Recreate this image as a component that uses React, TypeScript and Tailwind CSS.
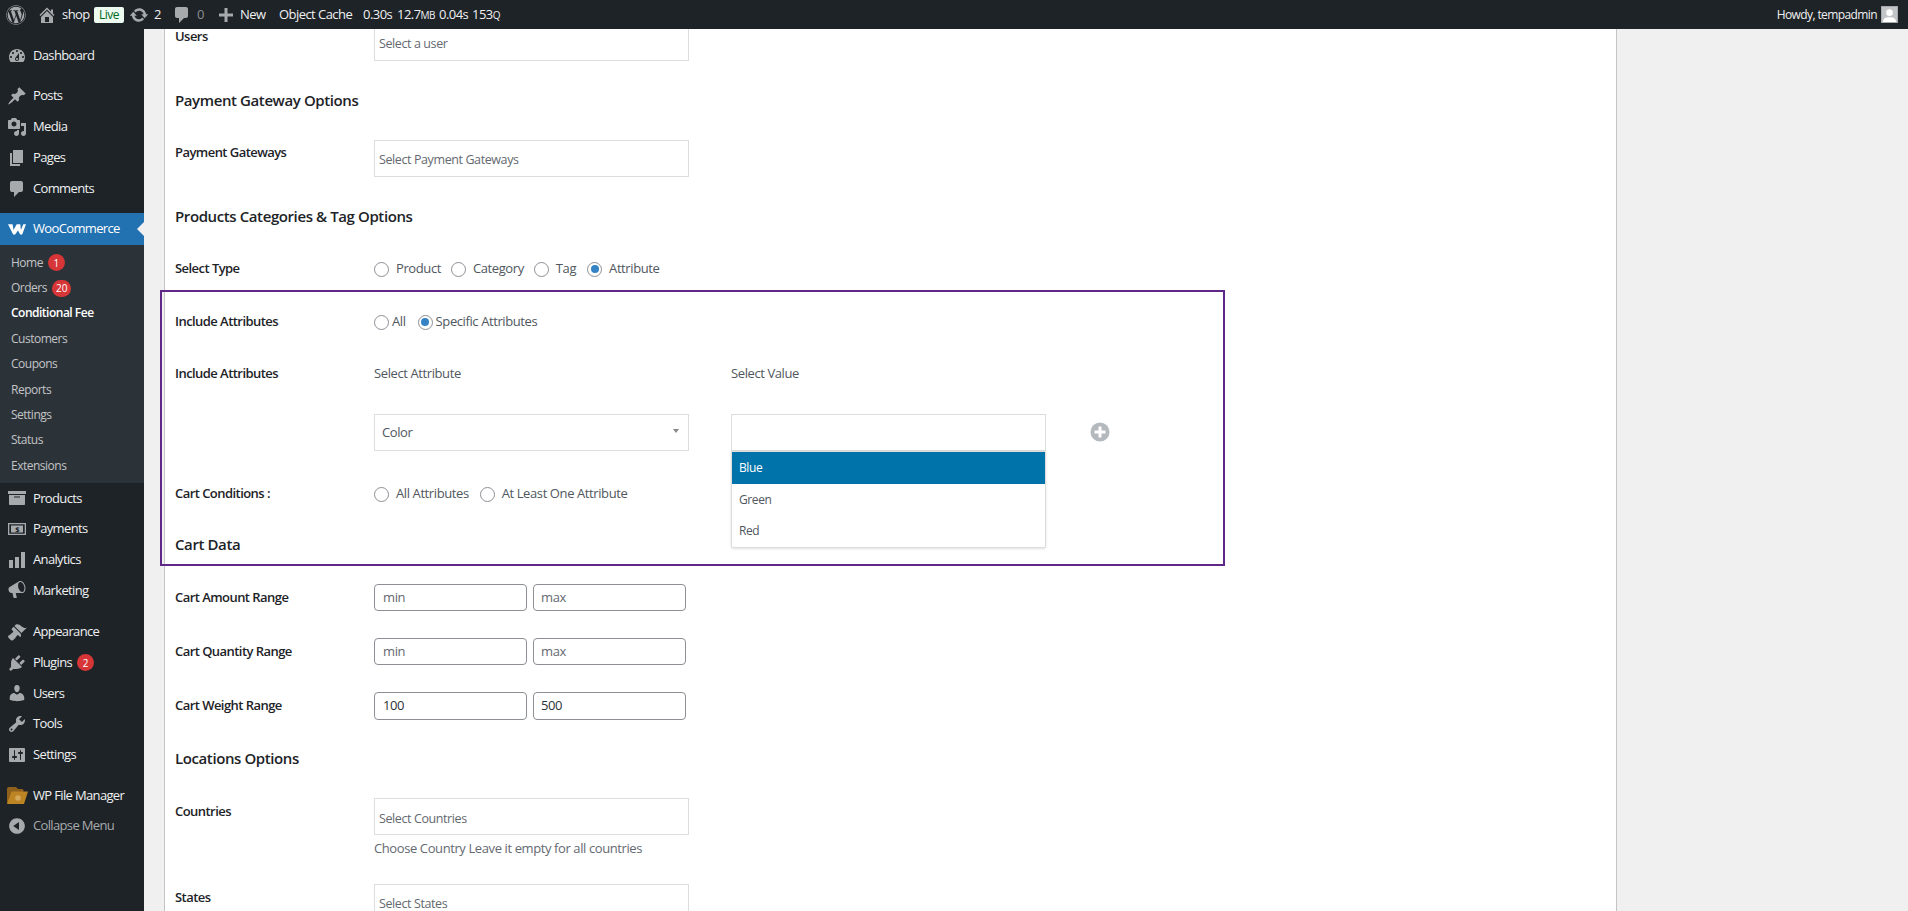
import type { ReactNode } from 'react';
import { FaWordpress } from 'react-icons/fa';

const dash = {
  dashboard: 'M3.76 16h12.48c1.1-1.37 1.76-3.11 1.76-5 0-4.42-3.58-8-8-8s-8 3.58-8 8c0 1.89.66 3.63 1.76 5zM10 4c.55 0 1 .45 1 1s-.45 1-1 1-1-.45-1-1 .45-1 1-1zM6 6c.55 0 1 .45 1 1s-.45 1-1 1-1-.45-1-1 .45-1 1-1zm8 0c.55 0 1 .45 1 1s-.45 1-1 1-1-.45-1-1 .45-1 1-1zm-5.37 5.55L12 7v6c0 1.1-.9 2-2 2s-2-.9-2-2c0-.57.24-1.08.63-1.45zM4 10c.55 0 1 .45 1 1s-.45 1-1 1-1-.45-1-1 .45-1 1-1zm12 0c.55 0 1 .45 1 1s-.45 1-1 1-1-.45-1-1 .45-1 1-1zm-5 3c0-.55-.45-1-1-1s-1 .45-1 1 .45 1 1 1 1-.45 1-1z',
  post: 'M10.44 3.02l1.82-1.82 6.36 6.35-1.83 1.82c-1.05-.68-2.48-.57-3.41.36l-.75.75c-.92.93-1.04 2.35-.35 3.41l-1.83 1.82-2.41-2.41-2.8 2.79c-.42.42-3.38 2.71-3.8 2.29s1.86-3.39 2.28-3.81l2.79-2.79L4.1 9.36l1.83-1.82c1.05.69 2.48.57 3.4-.36l.75-.75c.93-.92 1.05-2.35.36-3.41z',
  media: 'M13 11V4c0-.55-.45-1-1-1h-1.67L9 1H5L3.67 3H2c-.55 0-1 .45-1 1v7c0 .55.45 1 1 1h10c.55 0 1-.45 1-1zM7 4.5c1.38 0 2.5 1.12 2.5 2.5S8.38 9.5 7 9.5 4.5 8.38 4.5 7 5.62 4.5 7 4.5zM14 6h5v10.5c0 1.38-1.12 2.5-2.5 2.5S14 17.88 14 16.5s1.12-2.5 2.5-2.5c.17 0 .34.02.5.05V9h-3V6zm-4 8.05V13h2v3.5c0 1.38-1.12 2.5-2.5 2.5S7 17.88 7 16.5 8.12 14 9.5 14c.17 0 .34.02.5.05z',
  page: 'M6 15V2h10v13H6zm-1 1h8v2H3V5h2v11z',
  comment: 'M5 2h9c1.1 0 2 .9 2 2v7c0 1.1-.9 2-2 2h-2l-5 5v-5H5c-1.1 0-2-.9-2-2V4c0-1.1.9-2 2-2z',
  archive: 'M19 3v3H1V3h18zM2 7h16v9c0 .55-.45 1-1 1H3c-.55 0-1-.45-1-1V7zm5 1.5v1h6v-1H7z',
  analytics: 'M18 18V2h-4v16h4zm-6 0V7H8v11h4zm-6 0v-8H2v8h4z',
  marketing: 'M18.15 5.94c.46 1.62.38 3.22-.02 4.48-.42 1.28-1.26 2.18-2.3 2.48-.16.06-.26.06-.4.06-.06.02-.12.02-.18.02-.06.02-.14.02-.22.02H8.7l1.12 4.5c.02.14-.06.26-.14.34-.08.1-.24.16-.34.16H6.95c-.1 0-.26-.06-.34-.16-.08-.08-.16-.2-.14-.34l-1-4.5H4.25l-.02-.02c-.5.06-1.08-.18-1.54-.62s-.88-1.08-1.06-1.88c-.24-.8-.2-1.56-.02-2.2.18-.62.58-1.08 1.06-1.3l.02-.02 9-5.4c.1-.06.18-.1.24-.16.06-.04.14-.08.24-.12.16-.08.28-.12.5-.18 1.04-.3 2.24.1 3.22.98.98.88 1.8 2.24 2.26 3.86zm-2.58 5.98h-.02c.4-.1.74-.34 1.04-.7.58-.7.86-1.76.86-3.04 0-.64-.1-1.3-.26-1.98-.34-1.36-1.02-2.5-1.78-3.24s-1.68-1.1-2.46-.88c-.82.22-1.4.96-1.7 2-.32 1.04-.28 2.36.06 3.72.38 1.36 1 2.5 1.8 3.24.78.74 1.62 1.1 2.46.88z',
  appearance: 'M14.48 11.06L7.41 3.99l1.5-1.5c.5-.56 2.3-.47 3.51.32 1.21.8 1.43 1.28 2.91 2.1 1.18.64 2.45 1.26 4.45.85zm-.71.71L6.7 4.7 4.93 6.47c-.39.39-.39 1.02 0 1.41l1.06 1.06c.39.39.39 1.03 0 1.42-.6.6-1.43 1.11-2.21 1.69-.35.26-.7.53-1.01.84C1.43 13.23.76 14.24 1.1 14.9c.54 1.06 2.48 3 3.54 3.54.66.34 1.67-.33 2.97-1.67.31-.31.58-.66.84-1.01.58-.78 1.09-1.61 1.69-2.21.39-.39 1.03-.39 1.42 0l1.06 1.06c.39.39 1.02.39 1.41 0z',
  plugins: 'M13.11 4.36L9.87 7.6 8 5.73l3.24-3.24c.35-.34 1.05-.2 1.56.32.52.51.66 1.21.31 1.55zm-8 1.77l.91-1.12 9.01 9.01-1.19.84c-.71.71-2.63 1.16-3.82 1.16H6.14L4.9 17.26c-.59.59-1.54.59-2.12 0-.59-.58-.59-1.53 0-2.12l1.24-1.24v-3.88c0-1.13.4-3.19 1.09-3.89zm7.26 3.97l3.24-3.24c.34-.35 1.04-.21 1.55.31.52.51.66 1.21.31 1.55l-3.24 3.25z',
  users: 'M10 9.25c-2.27 0-2.73-3.44-2.73-3.44C7 4.02 7.82 2 9.97 2c2.16 0 2.98 2.02 2.71 3.81 0 0-.41 3.44-2.68 3.44zm0 2.57L12.72 10c2.39 0 4.52 2.33 4.52 4.53v2.49s-3.65 1.13-7.24 1.13c-3.65 0-7.24-1.13-7.24-1.13v-2.49c0-2.25 1.94-4.48 4.47-4.48z',
  tools: 'M16.68 9.77c-1.34 1.34-3.3 1.67-4.95.99l-5.41 6.52c-.99.99-2.59.99-3.58 0s-.99-2.59 0-3.57l6.52-5.42c-.68-1.65-.35-3.61.99-4.95 1.28-1.28 3.12-1.62 4.72-1.06l-2.89 2.89 2.82 2.82 2.86-2.87c.53 1.58.18 3.39-1.08 4.67zM3.81 16.21c.4.39 1.04.39 1.43 0 .4-.4.4-1.04 0-1.43-.39-.4-1.03-.4-1.43 0-.39.39-.39 1.03 0 1.43z',
  settings: 'M18 16V4c0-.55-.45-1-1-1H3c-.55 0-1 .45-1 1v12c0 .55.45 1 1 1h14c.55 0 1-.45 1-1zM8 11h1c.55 0 1 .45 1 1s-.45 1-1 1H8v1.5c0 .28-.22.5-.5.5s-.5-.22-.5-.5V13H6c-.55 0-1-.45-1-1s.45-1 1-1h1V5.5c0-.28.22-.5.5-.5s.5.22.5.5V11zm5-2h-1c-.55 0-1-.45-1-1s.45-1 1-1h1V5.5c0-.28.22-.5.5-.5s.5.22.5.5V7h1c.55 0 1 .45 1 1s-.45 1-1 1h-1v5.5c0 .28-.22.5-.5.5s-.5-.22-.5-.5V9z',
  collapse: 'M10 2.16c4.33 0 7.84 3.51 7.84 7.84s-3.51 7.84-7.84 7.84S2.16 14.33 2.16 10 5.71 2.16 10 2.16zm2 11.72V6.12L6.18 9.97z',
  home: 'M16 8.5l1.53 1.53-1.06 1.06L10 4.62l-6.47 6.47-1.06-1.06L10 2.5l4 4v-2h2v4zm-6-2.46l6 5.99V18H4v-5.97zM12 17v-5H8v5h4z',
  update: 'M10.2 3.28c3.53 0 6.43 2.61 6.92 6h2.08l-3.5 4-3.5-4h2.32c-.45-1.97-2.21-3.44-4.32-3.44-1.45 0-2.73.71-3.54 1.78L4.95 5.66C6.23 4.2 8.11 3.28 10.2 3.28zm-.4 13.44c-3.52 0-6.43-2.61-6.92-6H.8l3.5-4c1.17 1.33 2.33 2.67 3.5 4H5.48c.45 1.97 2.21 3.44 4.32 3.44 1.45 0 2.73-.71 3.54-1.78l1.71 1.95c-1.28 1.46-3.15 2.39-5.25 2.39z',
  plus: 'M17 8.5v3h-5.5V17h-3v-5.5H3v-3h5.5V3h3v5.5H17z',
};

const Dash = ({ d, className = 'w-5 h-5 text-[#a7aaad]' }: { d: string; className?: string }) => (
  <svg viewBox="0 0 20 20" fill="currentColor" className={className}>
    <path d={d} />
  </svg>
);

const WooLogo = () => (
  <svg viewBox="0 0 18 11" className="h-[11px] w-[18px] text-white" fill="currentColor">
    <path d="M0 .3h4.600l.9 5.600L8.700.3h3.600l.6 5.600L15.300.3H18l-3.600 9.600c-.5 1-2 1-2.500 0L10 6.500l-2.500 3.500c-.7 1-2.300.8-2.700-.3z" />
  </svg>
);

const FolderIcon = () => (
  <svg viewBox="0 0 21 17" className="h-[17px] w-[21px]">
    <path d="M0 2C0 .8.800 0 2 0h7l2 2h4c1 0 1.500.6 1.500 1.500V17H2c-1.200 0-2-.8-2-2z" fill="#8f5f1c" />
    <path d="M4.500 4.500H21L17 17H0z" fill="#bd8424" />
    <circle cx="11" cy="11" r="2.800" fill="#d3a75c" />
  </svg>
);

const PaymentIcon = () => (
  <svg viewBox="0 0 20 20" className="h-5 w-5 text-[#a7aaad]" fill="currentColor">
    <path fillRule="evenodd" d="M1 4h18v12H1zm1.300 1.300v9.400h15.400V5.300zM4 6.500h12v7H4z" />
    <text x="10" y="12.800" textAnchor="middle" fontSize="7.500" fontWeight="700" fill="#1d2327">$</text>
  </svg>
);

const Badge = ({ children, className = '' }: { children: ReactNode; className?: string }) => (
  <span className={`inline-flex h-[17px] min-w-[17px] items-center justify-center rounded-full bg-[#d63638] px-[4px] text-[10px] leading-none tracking-normal text-white ${className}`}>
    {children}
  </span>
);

type MenuItem = { label: string; icon: ReactNode; mt?: string; badge?: string; muted?: boolean };

const mainMenu: MenuItem[] = [
  { label: 'Dashboard', icon: <Dash d={dash.dashboard} />, mt: 'mt-[11px]' },
  { label: 'Posts', icon: <Dash d={dash.post} />, mt: 'mt-[9px]' },
  { label: 'Media', icon: <Dash d={dash.media} /> },
  { label: 'Pages', icon: <Dash d={dash.page} /> },
  { label: 'Comments', icon: <Dash d={dash.comment} /> },
];

const lowerMenu: MenuItem[] = [
  { label: 'Products', icon: <Dash d={dash.archive} /> },
  { label: 'Payments', icon: <PaymentIcon /> },
  { label: 'Analytics', icon: <Dash d={dash.analytics} /> },
  { label: 'Marketing', icon: <Dash d={dash.marketing} /> },
  { label: 'Appearance', icon: <Dash d={dash.appearance} />, mt: 'mt-[11px]' },
  { label: 'Plugins', icon: <Dash d={dash.plugins} />, badge: '2' },
  { label: 'Users', icon: <Dash d={dash.users} /> },
  { label: 'Tools', icon: <Dash d={dash.tools} /> },
  { label: 'Settings', icon: <Dash d={dash.settings} /> },
  { label: 'WP File Manager', icon: <FolderIcon />, mt: 'mt-[10px]' },
  { label: 'Collapse Menu', icon: <Dash d={dash.collapse} />, muted: true },
];

const subMenu = ['Home', 'Orders', 'Conditional Fee', 'Customers', 'Coupons', 'Reports', 'Settings', 'Status', 'Extensions'];

const MenuRow = ({ item, height }: { item: MenuItem; height: string }) => (
  <div className={`flex items-center ${height} ${item.mt ?? ''}`}>
    <span className="flex w-[33px] shrink-0 items-center justify-center pl-[1px]">{item.icon}</span>
    <span className={item.muted ? 'text-[#a7aaad]' : 'text-[#f0f0f1]'}>{item.label}</span>
    {item.badge && <Badge className="ml-[5px]">{item.badge}</Badge>}
  </div>
);

const Sidebar = () => (
  <aside className="w-[144px] shrink-0 bg-[#1d2327] tracking-[-0.65px]">
    {mainMenu.map((item) => (
      <MenuRow key={item.label} item={item} height="h-[31px]" />
    ))}
    <div className="relative mt-[9px] flex h-[32px] items-center bg-[#2271b1] text-white">
      <span className="flex w-[33px] shrink-0 items-center justify-center">
        <WooLogo />
      </span>
      WooCommerce
      <span className="absolute right-0 top-[9px] h-0 w-0 border-y-[7px] border-r-[7px] border-y-transparent border-r-[#f0f0f1]" />
    </div>
    <div className="h-[238px] bg-[#2c3338] pt-[5px]">
      {subMenu.map((label) => (
        <div
          key={label}
          className={`flex h-[25.4px] items-center pl-[11px] text-[12px] tracking-[-0.5px] ${label === 'Conditional Fee' ? 'font-semibold text-white' : 'text-[#c3c4c7]'}`}
        >
          {label}
          {label === 'Home' && <Badge className="ml-[5px]">1</Badge>}
          {label === 'Orders' && <Badge className="ml-[5px]">20</Badge>}
        </div>
      ))}
    </div>
    {lowerMenu.map((item) => (
      <MenuRow key={item.label} item={item} height="h-[30.7px]" />
    ))}
  </aside>
);

const TopBar = () => (
  <header className="flex h-[29px] shrink-0 items-center bg-[#1d2327] tracking-[-0.55px] text-[#f0f0f1]">
    <FaWordpress className="ml-[6px] h-[20px] w-[20px] text-[#a7aaad]" />
    <Dash d={dash.home} className="ml-[11px] h-5 w-5 text-[#a7aaad]" />
    <span className="ml-[5px] w-[24px]">shop</span>
    <span className="ml-[8px] flex h-[16px] w-[30px] items-center justify-center rounded-[2px] bg-[#edfaef] text-[12px] text-[#00691e]">Live</span>
    <Dash d={dash.update} className="ml-[5px] h-5 w-5 text-[#a7aaad]" />
    <span className="ml-[5px] w-[7px]">2</span>
    <Dash d={dash.comment} className="ml-[11px] h-5 w-5 text-[#a7aaad]" />
    <span className="ml-[5px] w-[7px] text-[#8c8f94]">0</span>
    <Dash d={dash.plus} className="ml-[12px] h-5 w-5 text-[#a7aaad]" />
    <span className="ml-[4px] w-[23px]">New</span>
    <span className="ml-[16px] w-[69px] whitespace-nowrap">Object Cache</span>
    <span className="ml-[15px] w-[26px]">0.30s</span>
    <span className="ml-[8px] w-[35px] whitespace-nowrap">
      12.7<span className="text-[10px]">MB</span>
    </span>
    <span className="ml-[7px] w-[26px]">0.04s</span>
    <span className="ml-[7px] whitespace-nowrap">
      153<span className="text-[10px]">Q</span>
    </span>
    <span className="ml-auto text-[12px] tracking-[-0.6px]">Howdy, tempadmin</span>
    <span className="ml-[4px] mr-[10px] flex h-[17px] w-[17px] items-end justify-center overflow-hidden border border-[#a7aaad] bg-[#c3c4c7]">
      <svg viewBox="0 0 16 16" className="h-[15px] w-[15px] text-white" fill="currentColor">
        <circle cx="8" cy="6" r="3.500" />
        <path d="M1 16c0-3.500 3-5 7-5s7 1.500 7 5z" />
      </svg>
    </span>
  </header>
);

const Label = ({ children, className = '' }: { children: ReactNode; className?: string }) => (
  <div className={`w-[199px] shrink-0 font-semibold tracking-[-0.55px] text-[#1d2327] ${className}`}>{children}</div>
);

const Heading = ({ children, mt }: { children: ReactNode; mt: string }) => (
  <h3 className={`flex h-[32px] items-center pb-[2px] text-[15px] font-semibold tracking-[-0.4px] text-[#1d2327] ${mt}`}>{children}</h3>
);

const SelectBox = ({ placeholder, pt = 'pt-[3px]' }: { placeholder: string; pt?: string }) => (
  <div className={`flex h-[37px] w-[315px] items-center border border-[#dddddd] bg-white pl-[4px] text-[12.5px] text-[#646970] ${pt}`}>
    {placeholder}
  </div>
);

const Radio = ({ checked = false, label, gap = 'ml-[7px]', mr = 'mr-[11px]' }: { checked?: boolean; label: string; gap?: string; mr?: string }) => (
  <span className={`flex items-center text-[#50575e] ${mr}`}>
    <span className="flex h-[15px] w-[15px] items-center justify-center rounded-full border border-[#8c8f94] bg-white">
      {checked && <span className="h-[8px] w-[8px] rounded-full bg-[#3582c4]" />}
    </span>
    <span className={gap}>{label}</span>
  </span>
);

const RangeRow = ({ label, min, max, mt, filled = false }: { label: string; min: string; max: string; mt: string; filled?: boolean }) => (
  <div className={`flex items-center ${mt}`}>
    <Label>{label}</Label>
    <div className="flex gap-[6px]">
      {[min, max].map((v, i) => (
        <div
          key={i}
          className={`flex w-[153px] items-center rounded-[4px] border border-[#8c8f94] bg-white ${filled ? 'h-[28px]' : 'h-[27px]'} ${i === 0 ? 'pl-[8px]' : 'pl-[7px]'} ${filled ? 'text-[#2c3338]' : 'text-[#646970]'}`}
        >
          {v}
        </div>
      ))}
    </div>
  </div>
);

const FormCard = () => (
  <div className="-mt-[5px] h-[900px] w-[1453px] border-x border-[#c3c4c7] bg-white pl-[10px]">
    <div className="flex">
      <Label className="mt-[6px] leading-[13px]">Users</Label>
      <SelectBox placeholder="Select a user" />
    </div>

    <Heading mt="mt-[24px]">Payment Gateway Options</Heading>
    <div className="mt-[23px] flex">
      <Label className="pt-[3px]">Payment Gateways</Label>
      <SelectBox placeholder="Select Payment Gateways" />
    </div>

    <Heading mt="mt-[24px]">Products Categories &amp; Tag Options</Heading>
    <div className="mt-[24px] flex h-[24px] items-center">
      <Label>Select Type</Label>
      <Radio label="Product" mr="mr-[10px]" />
      <Radio label="Category" mr="mr-[10px]" />
      <Radio label="Tag" mr="mr-[11px]" />
      <Radio label="Attribute" checked />
    </div>

    {/* highlighted block */}
    <div className="-ml-[15px] mt-[9px] h-[276px] w-[1065px] border-2 border-[#5f2787] pl-[13px]">
      <div className="mt-[18px] flex h-[24px] items-center">
        <Label>Include Attributes</Label>
        <Radio label="All" gap="ml-[3px]" mr="mr-[12px]" />
        <Radio label="Specific Attributes" checked gap="ml-[3px]" />
      </div>
      <div className="mt-[31px] flex h-[18px] items-center">
        <Label>Include Attributes</Label>
        <span className="w-[357px] text-[#50575e]">Select Attribute</span>
        <span className="text-[#50575e]">Select Value</span>
      </div>
      <div className="mt-[31px] flex h-[37px] pl-[199px]">
        <div className="relative flex h-[37px] w-[315px] items-center border border-[#dddddd] pl-[7px] text-[#50575e]">
          Color
          <span className="absolute right-[9px] top-[14px] h-0 w-0 border-x-[3px] border-t-[4px] border-x-transparent border-t-[#888888]" />
        </div>
        <div className="relative ml-[42px] h-[37px] w-[315px] border border-[#dddddd] bg-white">
          <div className="absolute -left-px -right-px top-[36px] z-10 rounded-b-[2px] border border-[#dddddd] bg-white text-[12px] shadow-sm">
            <div className="flex h-[32px] items-center bg-[#0073aa] pl-[7px] font-medium text-white">Blue</div>
            <div className="flex h-[31px] items-center pl-[7px] text-[#50575e]">Green</div>
            <div className="flex h-[32px] items-center pl-[7px] text-[#50575e]">Red</div>
          </div>
        </div>
        <svg viewBox="0 0 20 20" className="ml-[44px] mt-[8px] h-[20px] w-[20px]">
          <circle cx="10" cy="10" r="9.500" fill="#b4b9be" />
          <path d="M8.500 4.500h3v4h4v3h-4v4h-3v-4h-4v-3h4z" fill="#ffffff" />
        </svg>
      </div>
      <div className="mt-[31px] flex h-[24px] items-center">
        <Label>Cart Conditions :</Label>
        <Radio label="All Attributes" />
        <Radio label="At Least One Attribute" />
      </div>
      <Heading mt="mt-[23px]">Cart Data</Heading>
    </div>

    <RangeRow label="Cart Amount Range" min="min" max="max" mt="mt-[18px]" />
    <RangeRow label="Cart Quantity Range" min="min" max="max" mt="mt-[27px]" />
    <RangeRow label="Cart Weight Range" min="100" max="500" mt="mt-[27px]" filled />

    <Heading mt="mt-[23px]">Locations Options</Heading>
    <div className="mt-[23px] flex">
      <Label className="pt-[4px]">Countries</Label>
      <div>
        <SelectBox placeholder="Select Countries" pt="pt-[5px]" />
        <p className="mt-[4px] text-[#646970]">Choose Country Leave it empty for all countries</p>
      </div>
    </div>
    <div className="mt-[25px] flex">
      <Label className="pt-[4px]">States</Label>
      <SelectBox placeholder="Select States" pt="pt-[4px]" />
    </div>
  </div>
);

const App = () => (
  <div className="flex h-[911px] flex-col overflow-hidden bg-[#f0f0f1] font-['Open_Sans','Noto_Sans',sans-serif] text-[13px] tracking-[-0.4px]">
    <TopBar />
    <div className="flex min-h-0 flex-1">
      <Sidebar />
      <main className="relative min-w-0 flex-1 overflow-hidden pl-[20px]">
        <FormCard />
      </main>
    </div>
  </div>
);

export default App;
